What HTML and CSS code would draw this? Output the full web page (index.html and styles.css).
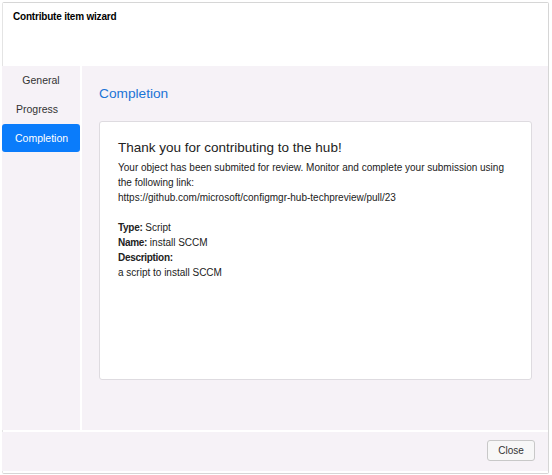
FILE: index.html
```html
<!DOCTYPE html>
<html>
<head>
<meta charset="utf-8">
<link rel="stylesheet" href="styles.css">
</head>
<body>
<div class="window">
  <div class="header">
    <div class="title">Contribute item wizard</div>
  </div>
  <div class="body">
    <nav class="nav">
      <div class="nav-item center">General</div>
      <div class="nav-item">Progress</div>
      <div class="nav-item active">Completion</div>
    </nav>
    <main class="main">
      <h2 class="page-title">Completion</h2>
      <section class="card">
        <h3 class="card-title">Thank you for contributing to the hub!</h3>
        <p class="text">Your object has been submited for review. Monitor and complete your submission using the following link:<br>https://github.com/microsoft/configmgr-hub-techpreview/pull/23</p>
        <p class="text"><b>Type:</b> Script<br><b>Name:</b> install SCCM<br><b>Description:</b><br>a script to install SCCM</p>
      </section>
    </main>
  </div>
  <div class="footer">
    <button class="btn">Close</button>
  </div>
</div>
</body>
</html>
```
FILE: styles.css
```css
html, body {
  margin: 0;
  padding: 0;
  background: #ffffff;
}
body {
  width: 552px;
  height: 475px;
  overflow: hidden;
  font-family: "Liberation Sans", Arial, sans-serif;
  color: #222;
}
.window {
  margin: 2px 0 0 2px;
  width: 545px;
  height: 470px;
  border: 1px solid #d6d6d6;
  border-left-color: #e4e4e4;
  border-radius: 2px;
  display: flex;
  flex-direction: column;
  background: #fff;
}
.header {
  height: 63px;
  padding: 8px 10px 0 10px;
  box-sizing: border-box;
  background: #fff;
}
.title {
  font-weight: bold;
  font-size: 10px;
  color: #000;
  letter-spacing: -0.2px;
}
.body {
  display: flex;
  gap: 2px;
  height: 364px;
}
.nav {
  width: 78px;
  background: #f6f2f7;
  display: flex;
  flex-direction: column;
  margin-left: -1px;
}
.nav-item {
  height: 29px;
  line-height: 29px;
  font-size: 10.5px;
  color: #333;
  padding-left: 14px;
}
.nav-item.center {
  text-align: center;
  padding-left: 0;
}
.nav-item.active {
  background: #0a7cfb;
  color: #fff;
  border-radius: 3px;
  height: 28px;
  line-height: 28px;
  padding-left: 13px;
}
.main {
  flex: 1;
  background: #f6f2f7;
  padding: 19px 16px 50px 17px;
  box-sizing: border-box;
  display: flex;
  flex-direction: column;
}
.page-title {
  margin: 0;
  font-weight: normal;
  font-size: 13.7px;
  color: #1b74d6;
  line-height: 17px;
}
.card {
  margin-top: 19px;
  flex: 1;
  background: #fff;
  border: 1px solid #dedbe0;
  border-radius: 3px;
  padding: 17px 18px;
}
.card-title {
  margin: 0 0 3px 0;
  font-weight: normal;
  font-size: 13.5px;
  line-height: 18px;
  color: #222;
}
.text {
  margin: 0 0 14px 0;
  font-size: 10px;
  line-height: 15.2px;
  color: #222;
}
.text b {
  letter-spacing: -0.3px;
}
.footer {
  margin-top: 2px;
  height: 39px;
  background: #f6f2f7;
  display: flex;
  justify-content: flex-end;
  align-items: flex-start;
  padding: 8px 13px 0 0;
  box-sizing: border-box;
  margin-left: -1px;
}
.btn {
  width: 48px;
  height: 21px;
  border: 1px solid #c8c8c8;
  border-radius: 3px;
  background: #f7f7f7;
  font-family: "Liberation Sans", Arial, sans-serif;
  font-size: 10px;
  color: #333;
  padding: 0;
}
```
